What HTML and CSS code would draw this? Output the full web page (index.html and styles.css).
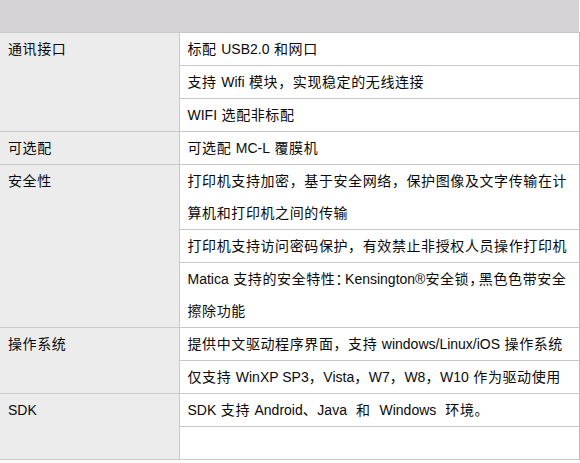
FILE: index.html
```html
<!DOCTYPE html>
<html lang="zh-CN">
<head>
<meta charset="utf-8">
<title>规格</title>
<link rel="stylesheet" href="styles.css">
</head>
<body>
<table class="spec">
  <colgroup><col class="col-label"><col class="col-val"></colgroup>
  <tr class="head-row"><td class="head" colspan="2"></td></tr>
  <tr><td class="label" rowspan="3">通讯接口</td><td class="val">标配 <span class="en">USB2.0</span> 和网口</td></tr>
  <tr><td class="val">支持 <span class="en">Wifi</span> 模块，实现稳定的无线连接</td></tr>
  <tr><td class="val"><span class="en">WIFI</span> 选配非标配</td></tr>
  <tr><td class="label">可选配</td><td class="val">可选配 <span class="en">MC-L</span> 覆膜机</td></tr>
  <tr><td class="label" rowspan="3">安全性</td><td class="val">打印机支持加密，基于安全网络，保护图像及文字传输在计算机和打印机之间的传输</td></tr>
  <tr><td class="val">打印机支持访问密码保护，有效禁止非授权人员操作打印机</td></tr>
  <tr><td class="val"><span class="en">Matica</span> 支持的安全特性<span class="half">：</span><span class="en">Kensington®</span>安全锁<span class="half">，</span>黑色色带安全擦除功能</td></tr>
  <tr><td class="label" rowspan="2">操作系统</td><td class="val">提供中文驱动程序界面，支持 <span class="en">windows/Linux/iOS</span> 操作系统</td></tr>
  <tr><td class="val">仅支持 <span class="en">WinXP SP3</span>，<span class="en">Vista</span>，<span class="en">W7</span>，<span class="en">W8</span>，<span class="en">W10</span> 作为驱动使用</td></tr>
  <tr><td class="label" rowspan="2"><span class="en">SDK</span></td><td class="val"><span class="en">SDK</span> 支持 <span class="en">Android</span>、<span class="en">Java</span>&nbsp; 和&nbsp; <span class="en">Windows</span>&nbsp; 环境。</td></tr>
  <tr><td class="val empty"></td></tr>
</table>
</body>
</html>
```
FILE: styles.css
```css
html, body {
  margin: 0;
  padding: 0;
  background: #ffffff;
}
body {
  font-family: "Liberation Sans", "Noto Sans CJK SC", sans-serif;
  font-size: 14px;
  letter-spacing: 0.6px;
  color: #0a0a0a;
}
.en {
  letter-spacing: 0;
}
.half {
  font-feature-settings: "halt" 1;
  padding-right: 2px;
}
.spec {
  border-collapse: collapse;
  width: 579px;
  table-layout: fixed;
}
.col-label {
  width: 179px;
}
.col-val {
  width: 400px;
}
.spec td {
  border: 1px solid #c9c9c9;
  padding: 0 2px 0 8px;
  line-height: 32px;
  vertical-align: top;
}
.spec .head {
  height: 32px;
  background: #d5d3d5;
  border-top: none;
  border-left: none;
  border-right: none;
  padding: 0;
}
.spec .label {
  background: #ececec;
  border-left: none;
}
.spec .val {
  background: #ffffff;
  border-right: 1px solid #bdbdbd;
}
.spec .empty {
  height: 32px;
}
```
